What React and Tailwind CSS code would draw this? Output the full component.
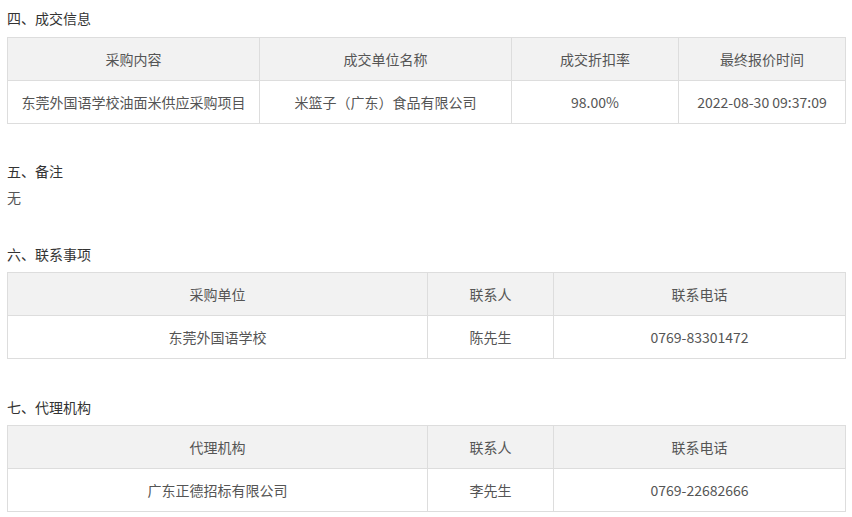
import React from "react";

const font = { fontFamily: '"Noto Sans CJK SC", "Noto Sans", sans-serif' };

function Table({ cols, head, row }) {
  return (
    <div className="grid border-l border-t border-[#dddddd] text-[14px] text-[#555555]" style={{ gridTemplateColumns: cols }}>
      {head.map((h) => (
        <div key={h} className="h-[43px] flex items-center justify-center bg-[#f2f2f2] border-r border-b border-[#dddddd]">{h}</div>
      ))}
      {row.map((c) => (
        <div key={c} className="h-[43px] flex items-center justify-center bg-white border-r border-b border-[#dddddd]">{c}</div>
      ))}
    </div>
  );
}

export default function App() {
  return (
    <div className="w-[852px] min-h-[517px] bg-white pl-[7px] pr-[6px] pt-[5px]" style={font}>
      <div className="leading-[26px] text-[14px] text-[#333333]">四、成交信息</div>
      <div className="mt-[6px]">
        <Table
          cols="252px 252px 167px 167px"
          head={["采购内容", "成交单位名称", "成交折扣率", "最终报价时间"]}
          row={["东莞外国语学校油面米供应采购项目", "米篮子（广东）食品有限公司", "98.00%", "2022-08-30 09:37:09"]}
        />
      </div>

      <div className="mt-[34px] leading-[26px] text-[14px] text-[#333333]">五、备注</div>
      <div className="leading-[26px] text-[14px] text-[#555555]">无</div>

      <div className="mt-[31px] leading-[26px] text-[14px] text-[#333333]">六、联系事项</div>
      <div className="mt-[5px]">
        <Table
          cols="420px 126px 292px"
          head={["采购单位", "联系人", "联系电话"]}
          row={["东莞外国语学校", "陈先生", "0769-83301472"]}
        />
      </div>

      <div className="mt-[35px] leading-[26px] text-[14px] text-[#333333]">七、代理机构</div>
      <div className="mt-[5px]">
        <Table
          cols="420px 126px 292px"
          head={["代理机构", "联系人", "联系电话"]}
          row={["广东正德招标有限公司", "李先生", "0769-22682666"]}
        />
      </div>
    </div>
  );
}
